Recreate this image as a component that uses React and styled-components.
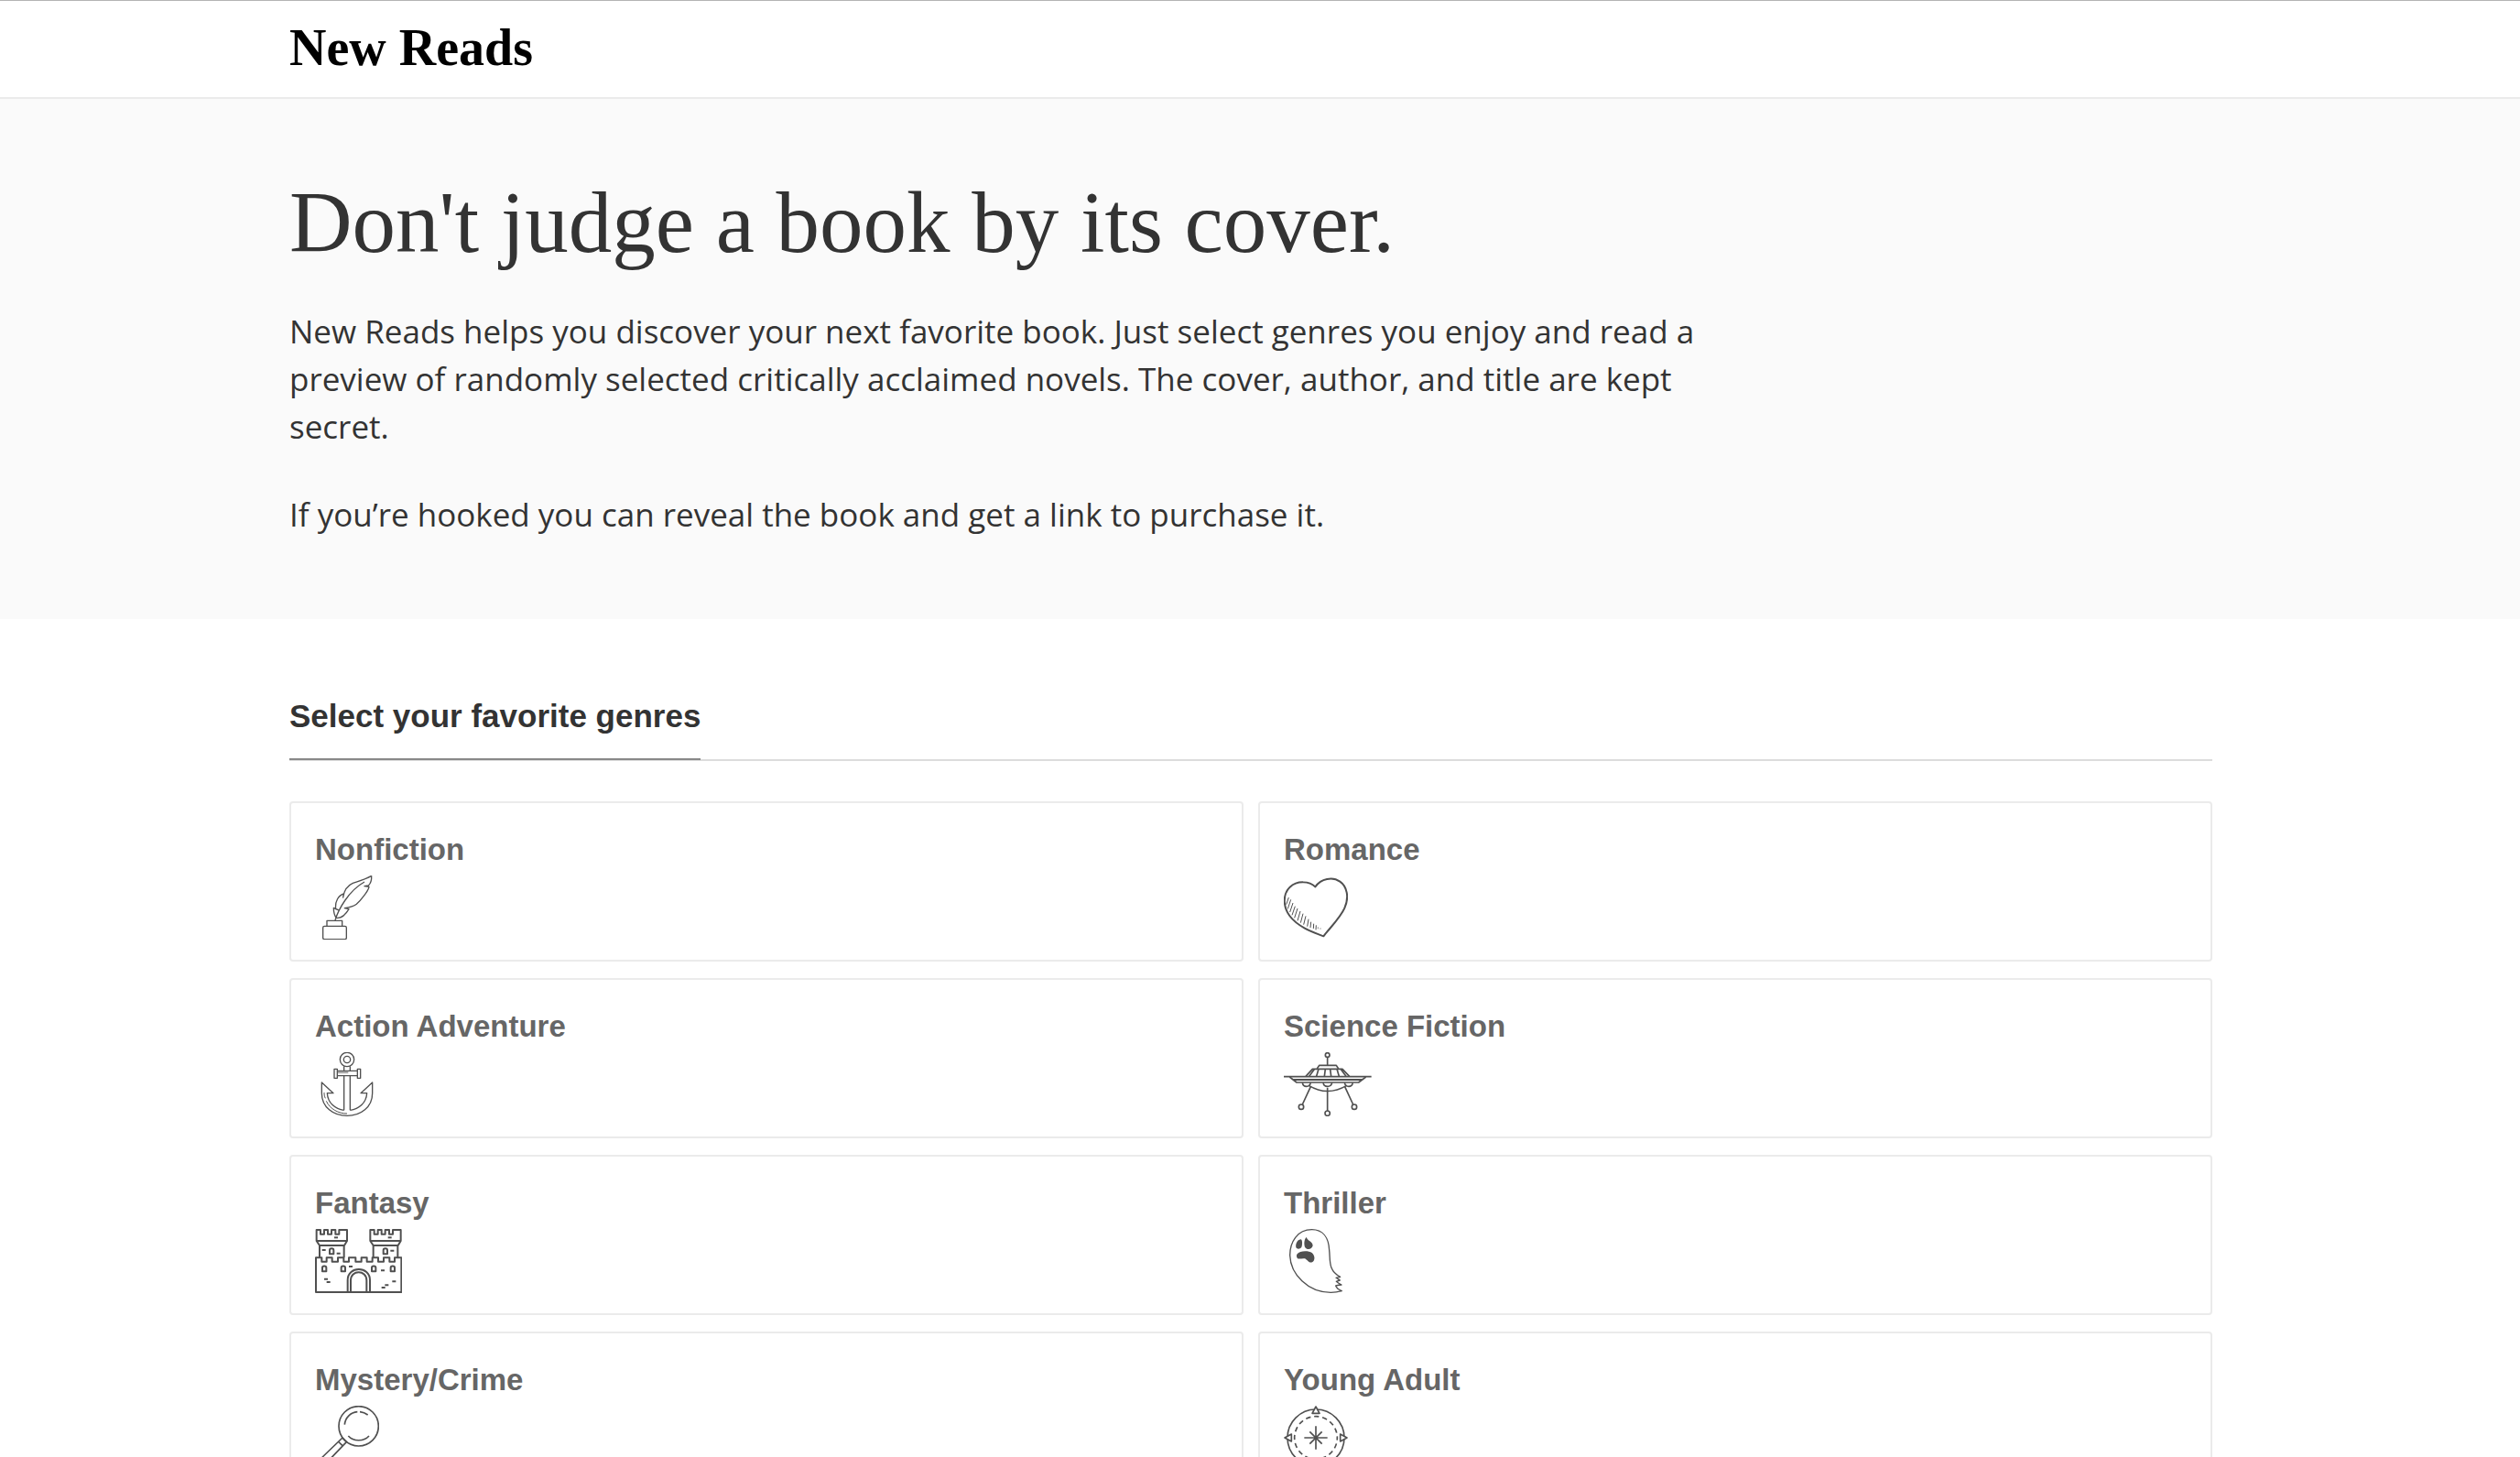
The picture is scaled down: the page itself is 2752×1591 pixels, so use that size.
import React, { useState } from 'react';
import styled, { createGlobalStyle } from 'styled-components';

const GlobalStyle = createGlobalStyle`
    * {
        box-sizing: border-box;
    }

    body {
        margin: 0;
        background-color: #fff;
        color: #333;
        font-family: "Open Sans", sans-serif;
    }
`;

const Page = styled.div`
    border-top: 1px solid #b4b4b4;
`;

const Wrapper = styled.div`
    width: 100%;
    max-width: 2100px;
    margin: 0 auto;
`;

const Header = styled.header`
    padding: 15px 20px 18px 0;
    border-bottom: 2px solid #ebebeb;
`;

const Logo = styled.a`
    display: block;
    width: fit-content;
    color: #000;
    font-family: "Liberation Serif", serif;
    font-size: 56px;
    font-weight: 700;
    line-height: 72px;
    text-decoration: none;
`;

const Hero = styled.section`
    padding: 80px 20px 88px 0;
    background-color: #fafafa;
`;

const HeroTitle = styled.h1`
    margin: 0 0 38px;
    font-family: "Liberation Serif", serif;
    font-size: 95px;
    font-weight: 400;
    line-height: 110px;
`;

const HeroText = styled.p`
    max-width: 1575px;
    margin: 0;
    font-size: 35px;
    font-weight: 400;
    line-height: 52px;

    & + & {
        margin-top: 44px;
    }
`;

const Genres = styled.section`
    padding: 74px 20px 88px 0;
`;

const GenresHeader = styled.div`
    display: flex;
    margin-bottom: 44px;
    border-bottom: 2px solid #dcdcdc;
`;

const GenresTitle = styled.h2`
    margin: 0 0 -1px;
    padding-bottom: 14px;
    border-bottom: 2px solid #888;
    font-family: "Liberation Sans", sans-serif;
    font-size: 35px;
    font-weight: 700;
    line-height: 64px;
`;

const GenreGrid = styled.div`
    display: grid;
    grid-template-columns: 1fr 1fr;
    gap: 18px 16px;
`;

const GenreCard = styled.button`
    display: flex;
    flex-direction: column;
    align-items: flex-start;
    padding: 23px 26px 22px;
    border: 2px solid ${props => (props.$selected ? '#888' : '#ebebeb')};
    border-radius: 4px;
    background-color: #fff;
    color: #666;
    font-family: "Liberation Sans", sans-serif;
    font-size: 33px;
    font-weight: 700;
    line-height: 56px;
    text-align: left;
    cursor: pointer;
`;

const Icon = styled.svg`
    display: block;
    height: 70px;
    fill: none;
    stroke: #505050;
    stroke-width: ${props => props.$stroke || 5};
    stroke-linejoin: round;
`;

const QuillIcon = () => (
    <Icon viewBox="42 48 210 210" $stroke={4}>
        <path d="M227 49C205 62 180 68 166 73C150 80 137 98 134 120L136 108C119 113 107 132 110 158L118 161L103 154C103 168 106 180 112 187" />
        <path d="M227 49C228 64 223 75 217 81L204 83L219 85C217 98 192 130 178 142C168 150 155 153 139 155L153 158C146 170 132 190 112 187" />
        <path d="M108 195C118 160 152 98 204 69" />
        <path d="M81 213V196H131V213" />
        <rect x="68" y="214" width="77" height="43" rx="5" />
    </Icon>
);

const HeartIcon = () => (
    <Icon viewBox="66 48 210 210" $stroke={6}>
        <path d="M169 85C150 66 109 64 86 86C60 112 65 153 85 180C110 214 155 232 196 247C215 222 251 187 265 155C281 119 273 84 250 68C225 50 188 59 169 85Z" />
        <path strokeWidth="3" d="M82 120L74 143M89 127L79 157M96 138L86 168M103 149L93 178M111 156L101 187M120 165L111 196M129 173L121 203M138 181L131 209M147 191L143 215M155 200L153 219M164 206L163 222M172 211L171 226" />
        <path strokeWidth="2" d="M178 217V223M186 220V224" />
    </Icon>
);

const AnchorIcon = () => (
    <Icon viewBox="42 42 210 210" $stroke={4}>
        <circle cx="147" cy="66" r="23" />
        <circle cx="147" cy="66" r="11" />
        <path d="M137 88V103M157 88V103M137 119V232M157 119V232" />
        <path d="M115 103H181V97H191V127H181V119H115V127H105V97H115ZM115 103V119M181 103V119" />
        <path stroke="#aaa" strokeWidth="7" d="M117 108H151" />
        <path d="M137 232C108 228 84 208 82 176H102L64 141V176C64 222 102 250 147 250C192 250 230 222 230 176V141L192 176H212C210 208 186 228 157 232" />
        <path strokeWidth="3" d="M72 174C72 181 73 187 76 193M79 202C92 229 119 243 147 243" />
    </Icon>
);

const UfoIcon = () => (
    <Icon viewBox="66 42 290 210">
        <circle cx="209" cy="51" r="7" />
        <path d="M209 58V85M175 96L182 85H238L245 96" />
        <path d="M138 121L160 97H258L281 121M149 121L167 97M180 97L173 121M202 97L199 121M218 97L221 121M240 97L247 121M252 97L270 121" />
        <path d="M66 122H353" />
        <path d="M85 123L108 141H311L335 123" />
        <path strokeWidth="6" d="M97 132H323" />
        <path d="M127 142C130 158 150 158 154 142M195 142C198 158 220 158 224 142M265 142C269 158 289 158 292 142" />
        <path strokeWidth="4" d="M148 151Q209 188 272 151" />
        <path d="M154 155L127 213M209 158V234M266 155L293 213" />
        <circle cx="123" cy="221" r="8" />
        <circle cx="209" cy="242" r="8" />
        <circle cx="297" cy="221" r="8" />
    </Icon>
);

const CastleTower = props => (
    <g {...props}>
        <path d="M47 51H60V65H72V51H84V65H96V51H109V65H121V51H147V87L138 102H57L47 87ZM47 87H147M57 102V142M137 102V142" />
        <path strokeWidth="6" d="M105 76H117" />
    </g>
);

const CastleIcon = () => (
    <Icon viewBox="42 48 285 210" $stroke={6}>
        <CastleTower />
        <CastleTower transform="translate(176 0)" />
        <path d="M45 255V142H64V155H80V142H98V155H117V142H136V155H153V142H175V155H194V142H212V155H230V142H249V155H267V142H286V155H303V142H325V255Z" />
        <path d="M149 254V216C149 168 222 168 222 216V254M159 254V216C159 181 211 181 211 216V254" />
        <path d="M90 130V118C90 110 103 110 103 118V130ZM266 130V118C266 110 279 110 279 118V130Z" />
        <path d="M66 187V175C66 168 79 168 79 175V187ZM128 187V175C128 168 141 168 141 175V187ZM228 187V175C228 168 241 168 241 175V187ZM290 187V175C290 168 303 168 303 175V187Z" />
        <path d="M65 117H77M113 128H125M289 119H301M153 171H165M258 184H270M72 212H84M80 222H92M295 220H307M271 232H283M260 240H272" />
    </Icon>
);

const GhostIcon = () => (
    <Icon viewBox="66 48 210 210" $stroke={4}>
        <path d="M158 50C110 50 86 91 86 134C88 196 145 256 220 256C234 256 245 254 256 251C246 247 239 242 236 234C243 232 248 231 255 231C249 228 243 225 238 220C242 218 246 217 250 216C246 213 241 211 237 208C242 207 246 206 251 205C210 184 219 150 215 118C213 75 193 50 158 50Z" />
        <path fill="#505050" stroke="none" d="M121 82C110 84 104 96 106 109C110 116 122 114 125 105C127 95 127 83 121 82ZM140 75C132 83 132 98 135 107C141 118 158 116 161 103C161 89 145 88 140 75ZM110 130C118 118 148 119 158 126C169 135 169 152 159 157C148 161 143 149 135 145C125 143 115 149 110 143C107 139 107 134 110 130Z" />
    </Icon>
);

const MagnifierIcon = () => (
    <Icon viewBox="42 132 210 210">
        <circle cx="185" cy="199" r="65" />
        <path d="M139 194C141 171 158 154 181 152M189 152C199 153 207 156 215 162M151 231C168 250 202 250 219 231" />
        <path d="M132 237L145 251M118 249L132 263M132 237L51 315C38 330 56 344 68 331L145 251" />
    </Icon>
);

const CompassIcon = () => (
    <Icon viewBox="66 132 210 210">
        <circle cx="171" cy="237" r="93" />
        <circle cx="171" cy="237" r="70" strokeDasharray="16 11.5" strokeDashoffset="8" />
        <path d="M171 199V275M133 237H209M151 217L191 257M191 217L151 257" />
        <path fill="#fff" d="M171 135L183 157H159ZM171 339L183 317H159ZM69 237L91 225V249ZM273 237L251 225V249Z" />
    </Icon>
);

const genres = [
    { name: 'Nonfiction', icon: QuillIcon },
    { name: 'Romance', icon: HeartIcon },
    { name: 'Action Adventure', icon: AnchorIcon },
    { name: 'Science Fiction', icon: UfoIcon },
    { name: 'Fantasy', icon: CastleIcon },
    { name: 'Thriller', icon: GhostIcon },
    { name: 'Mystery/Crime', icon: MagnifierIcon },
    { name: 'Young Adult', icon: CompassIcon },
];

function App() {
    const [selected, setSelected] = useState([]);

    const toggleGenre = name => {
        setSelected(current =>
            current.includes(name) ? current.filter(item => item !== name) : [...current, name]
        );
    };

    return (
        <Page>
            <GlobalStyle />
            <Header>
                <Wrapper>
                    <Logo href="/">New Reads</Logo>
                </Wrapper>
            </Header>
            <Hero>
                <Wrapper>
                    <HeroTitle>Don't judge a book by its cover.</HeroTitle>
                    <HeroText>
                        New Reads helps you discover your next favorite book. Just select genres you
                        enjoy and read a preview of randomly selected critically acclaimed novels.
                        The cover, author, and title are kept secret.
                    </HeroText>
                    <HeroText>
                        If you’re hooked you can reveal the book and get a link to purchase it.
                    </HeroText>
                </Wrapper>
            </Hero>
            <Genres>
                <Wrapper>
                    <GenresHeader>
                        <GenresTitle>Select your favorite genres</GenresTitle>
                    </GenresHeader>
                    <GenreGrid>
                        {genres.map(({ name, icon: GenreIcon }) => (
                            <GenreCard
                                key={name}
                                type="button"
                                aria-pressed={selected.includes(name)}
                                $selected={selected.includes(name)}
                                onClick={() => toggleGenre(name)}
                            >
                                {name}
                                <GenreIcon />
                            </GenreCard>
                        ))}
                    </GenreGrid>
                </Wrapper>
            </Genres>
        </Page>
    );
}

export default App;
